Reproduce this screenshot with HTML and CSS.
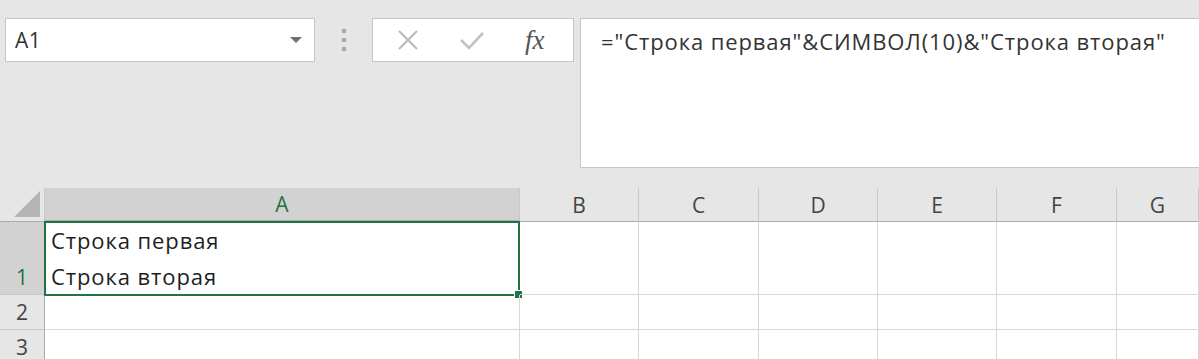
FILE: index.html
```html
<html>
  <head>
    <title>Excel - СИМВОЛ(10)</title>
    <link rel="stylesheet" href="styles.css">
  </head>
  <body>
    <header class="toolbar">
      <div class="namebox">
        <span class="cellref">A1</span>
        <svg class="dropdown" width="12" height="7" viewBox="0 0 12 7"><polygon points="0,0 12,0 6,6" fill="#707070"/></svg>
      </div>
      <div class="grip"><span></span><span></span><span></span></div>
      <div class="buttons">
        <svg class="btn" width="22" height="22" viewBox="0 0 22 22"><path d="M2 2 L20 20 M20 2 L2 20" stroke="#b8b8b8" stroke-width="2" fill="none"/></svg>
        <svg class="btn" width="26" height="22" viewBox="0 0 26 22"><path d="M2 11 L10 19 L24 4" stroke="#c2c2c2" stroke-width="2.6" fill="none"/></svg>
        <span class="fx">fx</span>
      </div>
      <div class="formula">="Строка первая"&amp;СИМВОЛ(10)&amp;"Строка вторая"</div>
    </header>

    <main class="sheet">
      <div class="corner"><svg width="26" height="26" viewBox="0 0 26 26"><polygon points="26,0 26,26 0,26" fill="#b5b5b5"/></svg></div>
      <div class="colhead active">A</div>
      <div class="colhead">B</div>
      <div class="colhead">C</div>
      <div class="colhead">D</div>
      <div class="colhead">E</div>
      <div class="colhead">F</div>
      <div class="colhead">G</div>

      <div class="rowhead active">1</div>
      <div class="cell selected">Строка первая<br>Строка вторая<span class="handle"></span></div>
      <div class="cell"></div>
      <div class="cell"></div>
      <div class="cell"></div>
      <div class="cell"></div>
      <div class="cell"></div>
      <div class="cell"></div>

      <div class="rowhead">2</div>
      <div class="cell"></div>
      <div class="cell"></div>
      <div class="cell"></div>
      <div class="cell"></div>
      <div class="cell"></div>
      <div class="cell"></div>
      <div class="cell"></div>

      <div class="rowhead">3</div>
      <div class="cell"></div>
      <div class="cell"></div>
      <div class="cell"></div>
      <div class="cell"></div>
      <div class="cell"></div>
      <div class="cell"></div>
      <div class="cell"></div>
    </main>
  </body>
</html>
```

FILE: styles.css
```css
body {
    margin: 0;
    font-family: "Open Sans", sans-serif;
    background: #e6e6e6;
    overflow: hidden;
}

.toolbar {
    display: flex;
    align-items: flex-start;
    height: 188px;
    padding: 18px 0 0 5px;
    box-sizing: border-box;
    background: #e6e6e6;
}

.namebox {
    display: flex;
    align-items: center;
    justify-content: space-between;
    width: 310px;
    height: 44px;
    box-sizing: border-box;
    padding: 0 12px 0 9px;
    background: #fff;
    border: 1px solid #c6c6c6;
}
.cellref {
    font-size: 21px;
    letter-spacing: 0.5px;
    color: #333;
}

.grip {
    display: flex;
    flex-direction: column;
    align-items: center;
    gap: 5px;
    width: 57px;
    height: 44px;
    padding-top: 11px;
    box-sizing: border-box;
}
.grip span {
    width: 4px;
    height: 4px;
    background: #a8a8a8;
}

.buttons {
    display: flex;
    align-items: center;
    width: 202px;
    height: 44px;
    box-sizing: border-box;
    padding-left: 24px;
    gap: 40px;
    background: #fff;
    border: 1px solid #c6c6c6;
}
.fx {
    font-family: "Liberation Serif", serif;
    font-style: italic;
    font-size: 27px;
    color: #555;
    margin-left: 0;
}

.formula {
    flex: 1;
    height: 150px;
    margin-left: 6px;
    box-sizing: border-box;
    padding: 7px 0 0 20px;
    background: #fff;
    border: 1px solid #c6c6c6;
    border-right: none;
    font-size: 22px;
    letter-spacing: 0.9px;
    color: #333;
    white-space: nowrap;
}

.sheet {
    display: grid;
    grid-template-columns: 45px 475px 119px 120px 119px 119px 120px 1fr;
    grid-template-rows: 34px 73px 35px 35px;
    background: #fff;
}

.corner {
    display: flex;
    align-items: flex-end;
    justify-content: flex-end;
    padding: 0 4px 4px 0;
    background: #e6e6e6;
    border-right: 1px solid #c8c8c8;
    border-bottom: 1px solid #ababab;
}

.colhead {
    display: flex;
    align-items: center;
    justify-content: center;
    background: #e6e6e6;
    border-right: 1px solid #c8c8c8;
    border-bottom: 1px solid #ababab;
    font-size: 21px;
    color: #444;
}
.colhead.active {
    background: #d2d2d2;
    color: #217346;
    border-bottom: 2px solid #ababab;
}

.rowhead {
    display: flex;
    align-items: flex-end;
    justify-content: center;
    background: #e6e6e6;
    border-right: 1px solid #ababab;
    border-bottom: 1px solid #c8c8c8;
    font-size: 21px;
    line-height: 34px;
    color: #444;
}
.rowhead.active {
    background: #d2d2d2;
    color: #217346;
}

.cell {
    position: relative;
    border-right: 1px solid #d8d8d8;
    border-bottom: 1px solid #d8d8d8;
    font-size: 22px;
    letter-spacing: 0.9px;
    line-height: 36px;
    color: #1e1e1e;
}
.cell.selected {
    border: 2px solid #217346;
    margin: -1px 0 -1px -1px;
    padding-left: 5px;
    display: flex;
    flex-direction: column;
    justify-content: flex-end;
}
.handle {
    position: absolute;
    right: -5px;
    bottom: -5px;
    width: 7px;
    height: 7px;
    background: #217346;
    border: 1px solid #fff;
}
```
